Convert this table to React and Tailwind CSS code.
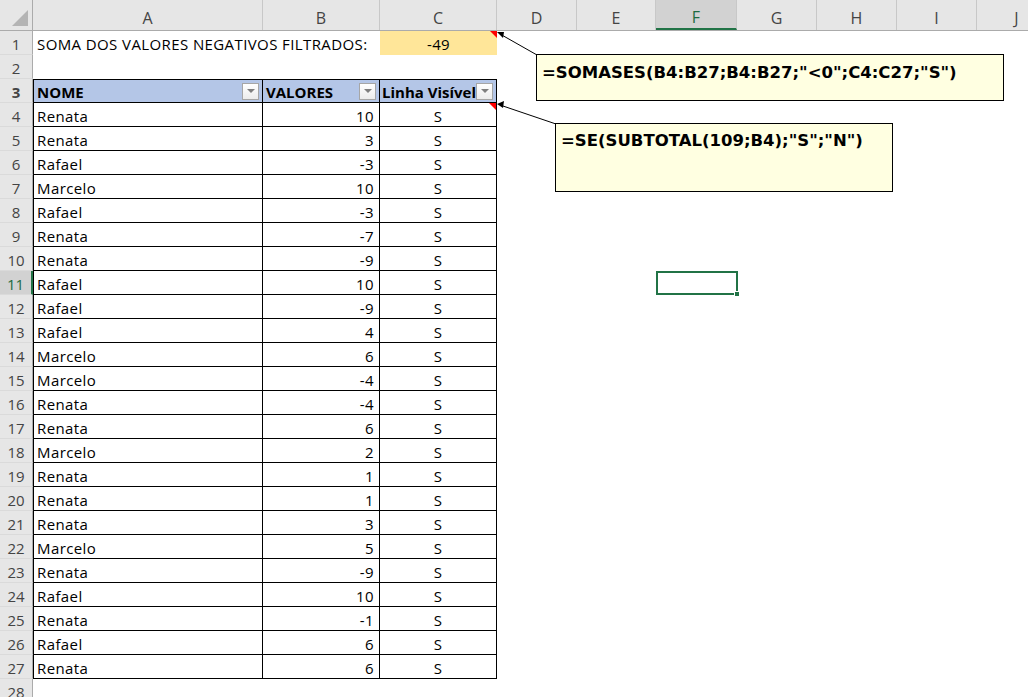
import React from "react";

const cols = [
  { key: "A", w: "w-[230px]" },
  { key: "B", w: "w-[117px]" },
  { key: "C", w: "w-[117px]" },
  { key: "D", w: "w-[80px]" },
  { key: "E", w: "w-[79px]" },
  { key: "F", w: "w-[81px]" },
  { key: "G", w: "w-[80px]" },
  { key: "H", w: "w-[80px]" },
  { key: "I", w: "w-[80px]" },
  { key: "J", w: "w-[80px]" },
];

const data = [
  ["Renata", 10],
  ["Renata", 3],
  ["Rafael", -3],
  ["Marcelo", 10],
  ["Rafael", -3],
  ["Renata", -7],
  ["Renata", -9],
  ["Rafael", 10],
  ["Rafael", -9],
  ["Rafael", 4],
  ["Marcelo", 6],
  ["Marcelo", -4],
  ["Renata", -4],
  ["Renata", 6],
  ["Marcelo", 2],
  ["Renata", 1],
  ["Renata", 1],
  ["Renata", 3],
  ["Marcelo", 5],
  ["Renata", -9],
  ["Rafael", 10],
  ["Renata", -1],
  ["Rafael", 6],
  ["Renata", 6],
];

function FilterButton() {
  return (
    <div className="absolute right-[3px] top-[3px] w-[17px] h-[17px] border border-[#a6a6a6] bg-gradient-to-b from-white to-[#ececec] flex items-center justify-center">
      <svg width="8" height="5" viewBox="0 0 8 5">
        <path d="M0 0 L8 0 L4 4 Z" fill="#7f7f7f" />
      </svg>
    </div>
  );
}

function RedMark() {
  return (
    <svg className="absolute right-0 top-0" width="7" height="7" viewBox="0 0 7 7">
      <path d="M0 0 L7 0 L7 7 Z" fill="#ff0000" />
    </svg>
  );
}

function RowHead({ n, active }) {
  return (
    <div
      className={
        "w-[33px] shrink-0 h-full flex items-center justify-center pt-[3px] text-[15px] tracking-normal border-b border-[#dadada] " +
        (active
          ? "bg-[#d2d2d2] text-[#1e6b41] border-r-2 border-r-[#217346]"
          : "bg-[#e6e6e6] text-[#444] border-r border-r-[#ababab]")
      }
    >
      {n}
    </div>
  );
}

export default function App() {
  return (
    <div
      className="relative w-[1028px] h-[697px] overflow-hidden bg-white text-black"
      style={{ fontFamily: "'Open Sans', 'Noto Sans', sans-serif" }}
    >
      {/* column headers */}
      <div className="flex h-[31px] bg-[#e6e6e6] border-b border-[#ababab]">
        <div className="w-[33px] shrink-0 relative border-r border-[#ababab]">
          <svg className="absolute right-[4px] bottom-[4px]" width="16" height="16" viewBox="0 0 16 16">
            <path d="M16 0 L16 16 L0 16 Z" fill="#b4b4b4" />
          </svg>
        </div>
        {cols.map((c) => (
          <div
            key={c.key}
            className={
              c.w +
              " shrink-0 flex items-center justify-center pt-[5px] text-[16px] border-r border-[#c8c8c8] " +
              (c.key === "F"
                ? "bg-[#d2d2d2] text-[#1e6b41] border-b-2 border-b-[#217346]"
                : "text-[#444]")
            }
          >
            {c.key}
          </div>
        ))}
      </div>

      {/* row 1 */}
      <div className="flex h-[24px] text-[15px] tracking-[0.4px]">
        <RowHead n={1} />
        <div className="w-[347px] shrink-0 flex items-center pt-[3px] pl-[4px] whitespace-nowrap">
          SOMA DOS VALORES NEGATIVOS FILTRADOS:
        </div>
        <div className="w-[117px] shrink-0 relative bg-[#ffe699] flex items-center justify-center pt-[3px]">
          -49
          <RedMark />
        </div>
      </div>

      {/* row 2 */}
      <div className="flex h-[24px]">
        <RowHead n={2} />
      </div>

      {/* row 3: table header */}
      <div className="flex h-[24px] text-[15px] font-bold">
        <RowHead n={3} />
        <div className="w-[230px] shrink-0 relative bg-[#b4c6e7] border border-black flex items-center pt-[2px] pl-[3px]">
          NOME
          <FilterButton />
        </div>
        <div className="w-[117px] shrink-0 relative bg-[#b4c6e7] border-y border-r border-black flex items-center pt-[2px] pl-[3px]">
          VALORES
          <FilterButton />
        </div>
        <div className="w-[117px] shrink-0 relative bg-[#b4c6e7] border-y border-r border-black flex items-center pt-[2px] pl-[2px] whitespace-nowrap overflow-hidden">
          Linha Visível
          <FilterButton />
        </div>
      </div>

      {/* data rows */}
      {data.map(([name, v], i) => (
        <div key={i} className="flex h-[24px] text-[15px] tracking-[0.4px]">
          <RowHead n={i + 4} active={i + 4 === 11} />
          <div className="w-[230px] shrink-0 border-x border-b border-black flex items-center pt-[3px] pl-[3px]">
            {name}
          </div>
          <div className="w-[117px] shrink-0 border-r border-b border-black flex items-center justify-end pt-[3px] pr-[5px]">
            {v}
          </div>
          <div className="w-[117px] shrink-0 relative border-r border-b border-black flex items-center justify-center pt-[3px]">
            S
            {i === 0 && <RedMark />}
          </div>
          <div className="w-[159px] shrink-0" />
          {i + 4 === 11 && (
            <div className="w-[82px] shrink-0 relative border-2 border-[#217346]">
              <div className="absolute -right-[4px] -bottom-[4px] w-[6px] h-[6px] bg-[#217346] border border-white" />
            </div>
          )}
        </div>
      ))}

      {/* row 28 */}
      <div className="flex h-[24px]">
        <RowHead n={28} />
      </div>

      {/* comment arrows */}
      <svg className="absolute left-0 top-0 pointer-events-none" width="1028" height="697">
        <line x1="500" y1="34" x2="537" y2="55" stroke="#000" strokeWidth="1" />
        <path d="M497 32 L504 32 L503 38 Z" fill="#000" />
        <line x1="500" y1="105" x2="556" y2="124" stroke="#000" strokeWidth="1" />
        <path d="M497 104 L504 101 L503 108 Z" fill="#000" />
      </svg>

      {/* comments */}
      <div
        className="absolute left-[536px] top-[54px] w-[468px] h-[47px] bg-[#ffffe1] border border-black px-[5px] pt-[6px] text-[16.5px] font-bold leading-[24px] whitespace-nowrap"
        style={{ fontFamily: "'DejaVu Sans', sans-serif" }}
      >
        =SOMASES(B4:B27;B4:B27;"&lt;0";C4:C27;"S")
      </div>
      <div
        className="absolute left-[555px] top-[123px] w-[338px] h-[69px] bg-[#ffffe1] border border-black px-[5px] pt-[5px] text-[16.5px] font-bold leading-[24px] whitespace-nowrap"
        style={{ fontFamily: "'DejaVu Sans', sans-serif" }}
      >
        =SE(SUBTOTAL(109;B4);"S";"N")
      </div>
    </div>
  );
}
